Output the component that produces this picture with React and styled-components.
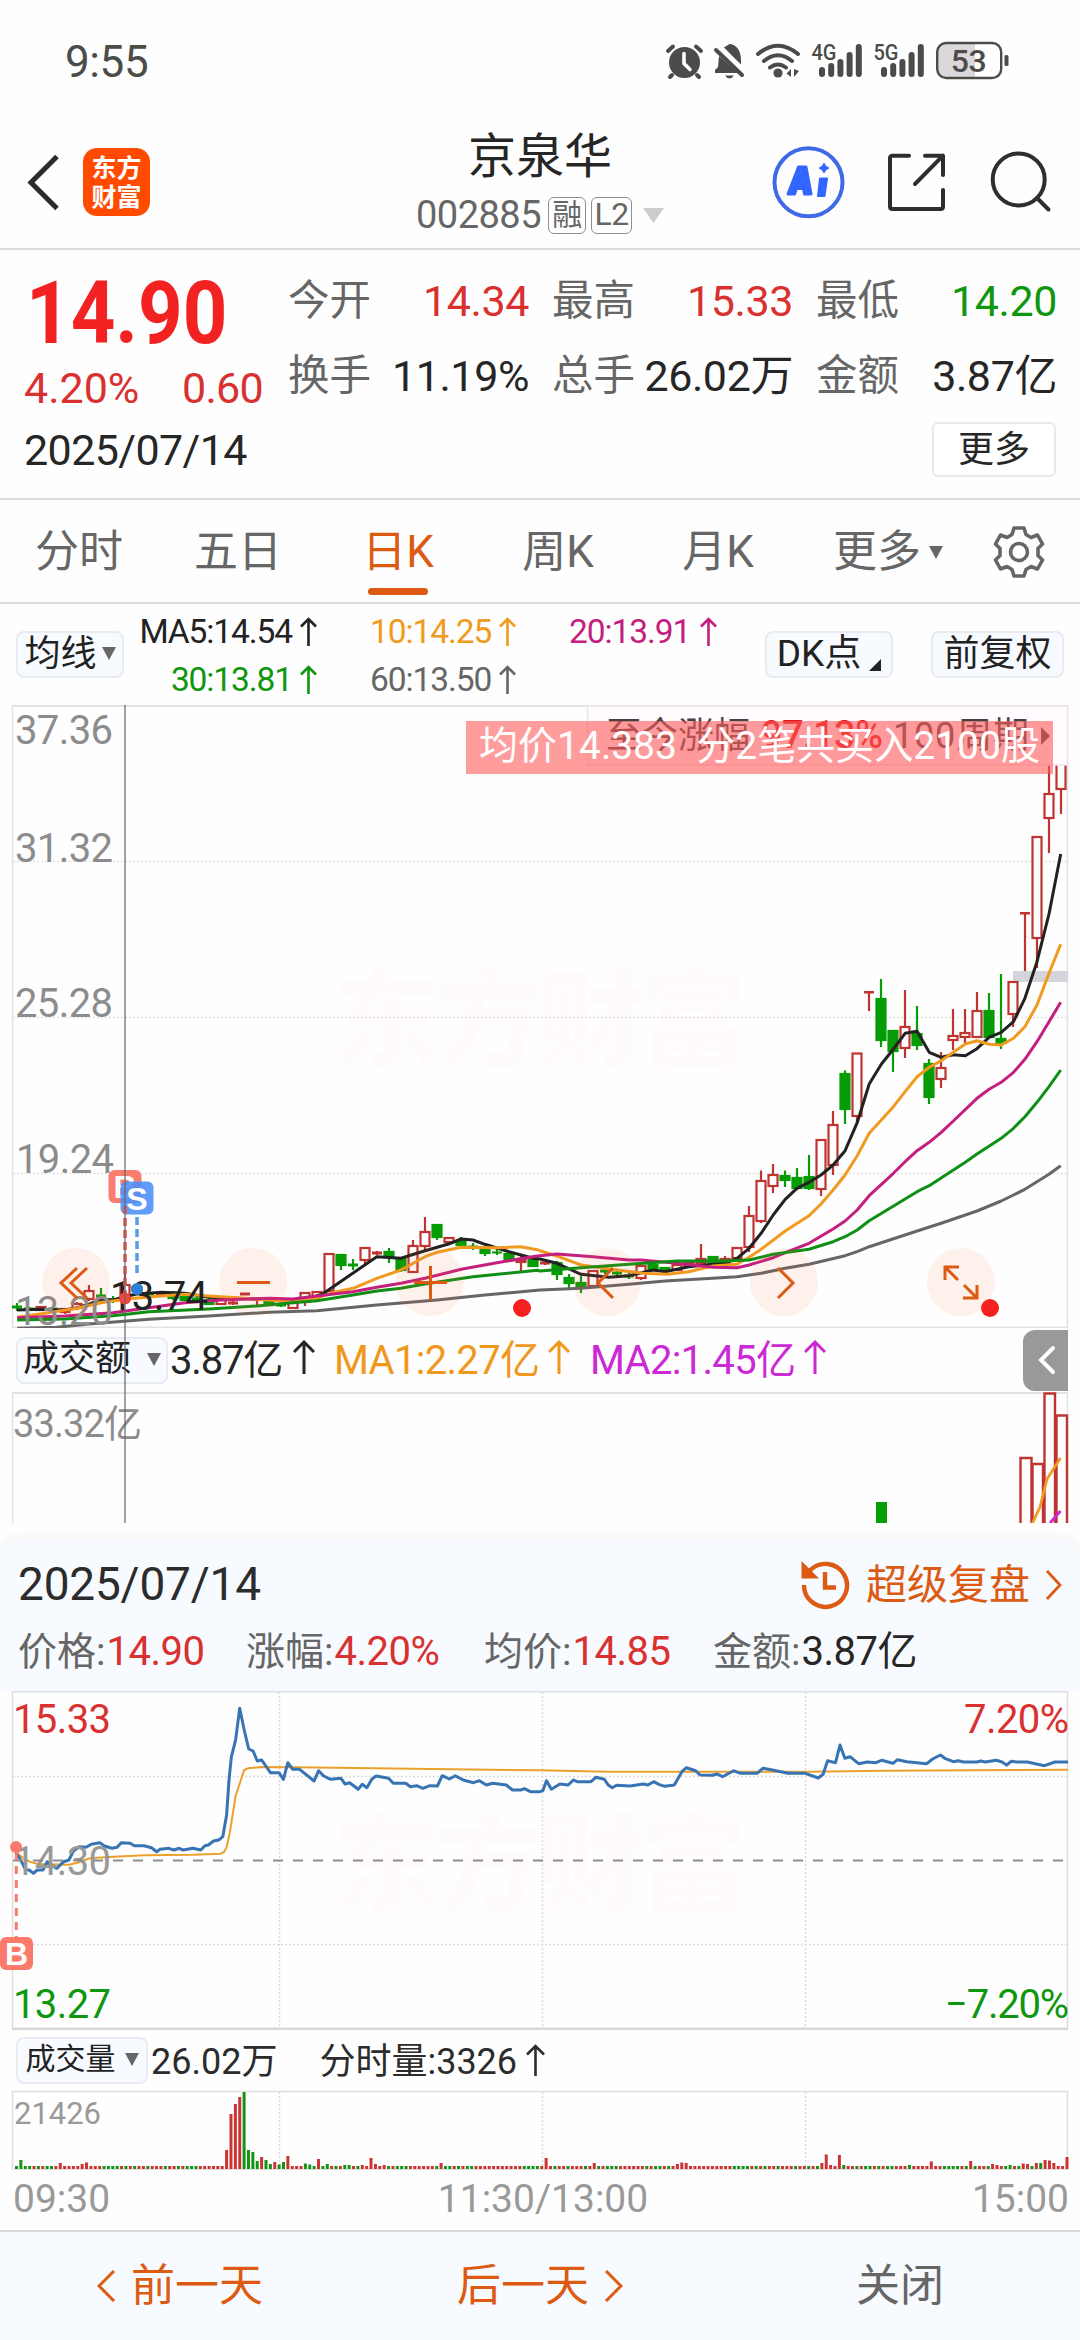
import React from 'react';
import styled, { createGlobalStyle } from 'styled-components';

const GlobalStyle = createGlobalStyle`
  * {
    box-sizing: border-box;
  }
  body {
    margin: 0;
    background: #fefefe;
    font-family: Roboto, 'Noto Sans CJK SC', sans-serif;
    color: #262626;
  }
  svg {
    display: block;
    flex: none;
  }
`;

const RED = '#d93030';
const GREEN = '#0f960f';
const ORANGE = '#dd5a12';
const GREY = '#666666';

const Page = styled.div`
  width: 1080px;
  height: 2340px;
  overflow: hidden;
  display: flex;
  flex-direction: column;
  white-space: nowrap;
`;

/* ---------- status bar ---------- */

const StatusBar = styled.div`
  height: 124px;
  flex: none;
  padding: 36px 71px 0 65px;
  display: flex;
  justify-content: space-between;
  color: #4b4c4a;
`;

const Clock = styled.div`
  font-size: 44px;
  line-height: 52px;
  letter-spacing: -0.4px;
`;

const StatusIcons = styled.div`
  display: flex;
  height: 50px;
`;

/* ---------- header ---------- */

const Header = styled.div`
  height: 126px;
  flex: none;
  display: grid;
  grid-template-columns: 340px 400px 340px;
  border-bottom: 2px solid #dcdcdc;
`;

const HeaderLeft = styled.div`
  display: flex;
  padding: 24px 0 0 26px;
  gap: 23px;
`;

const BrandLogo = styled.div`
  width: 67px;
  height: 68px;
  border-radius: 14px;
  background: #ff4a00;
  color: #fff;
  font-family: 'Noto Sans CJK SC', sans-serif;
  font-weight: 700;
  font-size: 25px;
  line-height: 29px;
  padding-top: 4px;
  text-align: center;
`;

const HeaderTitle = styled.div`
  display: flex;
  flex-direction: column;
  align-items: center;
`;

const StockName = styled.div`
  font-size: 48px;
  line-height: 62px;
  padding-top: 2px;
`;

const StockCode = styled.div`
  display: flex;
  align-items: center;
  height: 50px;
  margin-top: 2px;
  font-size: 38px;
  color: ${GREY};
  letter-spacing: -0.5px;
`;

const CodeTag = styled.span`
  width: ${(p) => p.$w}px;
  height: 37px;
  margin-left: ${(p) => p.$ml}px;
  border: 1.5px solid #8f8f8f;
  border-radius: 6px;
  font-size: ${(p) => p.$size}px;
  line-height: 33px;
  text-align: center;
`;

const HeaderRight = styled.div`
  display: flex;
  justify-content: flex-end;
  padding: 21px 24px 0 0;
`;

/* ---------- quote ---------- */

const Quote = styled.div`
  height: 250px;
  flex: none;
  padding: 18px 24px 0 24px;
  border-bottom: 2px solid #dcdcdc;
`;

const QuoteTop = styled.div`
  display: flex;
  height: 144px;
`;

const PriceBlock = styled.div`
  width: 264px;
  flex: none;
`;

const BigPrice = styled.div`
  font-size: 88px;
  font-weight: 700;
  line-height: 88px;
  color: #f22222;
  transform: scaleX(0.885);
  transform-origin: left;
  margin-left: 2px;
  padding-top: 1px;
`;

const PriceChange = styled.div`
  display: flex;
  justify-content: space-between;
  width: 239px;
  margin-top: 3px;
  font-size: 43px;
  line-height: 56px;
  color: ${RED};

  span:last-child {
    letter-spacing: -0.7px;
  }
`;

const QuoteGrid = styled.div`
  display: grid;
  grid-template-columns: repeat(3, 241px);
  grid-auto-rows: 75px;
  column-gap: 23px;
`;

const QuoteCell = styled.div`
  display: flex;
  justify-content: space-between;
  line-height: 66px;
  font-size: 41.5px;
  color: ${GREY};
`;

const QuoteValue = styled.span`
  font-size: 43px;
  letter-spacing: -0.4px;
  color: ${(p) => p.$color || '#262626'};
`;

const QuoteBottom = styled.div`
  display: flex;
  justify-content: space-between;
  padding-top: 10px;
`;

const QuoteDate = styled.div`
  font-size: 43px;
  line-height: 56px;
  letter-spacing: -0.6px;
`;

const MoreButton = styled.button`
  width: 124px;
  height: 55px;
  padding: 0;
  border: 2px solid #e9e9e9;
  border-radius: 6px;
  background: #fff;
  font: inherit;
  font-size: 36px;
  line-height: 48px;
  color: #262626;
`;

/* ---------- tabs ---------- */

const Tabs = styled.div`
  height: 104px;
  flex: none;
  display: grid;
  grid-template-columns: 158px repeat(4, 160px) 180px 82px;
  border-bottom: 2px solid #dcdcdc;
`;

const Tab = styled.div`
  display: flex;
  flex-direction: column;
  align-items: center;
  padding-top: 21px;
  font-size: 44px;
  line-height: 62px;
  color: ${(p) => (p.$active ? ORANGE : GREY)};
`;

const TabLine = styled.div`
  width: 60px;
  height: 7px;
  border-radius: 4px;
  background: ${ORANGE};
  margin-top: 5px;
`;

const MoreTab = styled(Tab)`
  flex-direction: row;
  align-items: flex-start;
  justify-content: center;
  gap: 8px;

  svg {
    margin-top: 25px;
  }
`;

const GearTab = styled.div`
  display: flex;
  justify-content: center;
  padding-top: 25px;
`;

/* ---------- indicator rows ---------- */

const IndicatorRow = styled.div`
  height: 101px;
  flex: none;
  display: flex;
  padding: 0 16px;
`;

const ChipButton = styled.button`
  display: flex;
  align-items: center;
  justify-content: center;
  gap: ${(p) => p.$gap || 5}px;
  width: ${(p) => p.$w}px;
  height: 47px;
  flex: none;
  margin-top: ${(p) => p.$mt || 0}px;
  padding: 0 0 2px;
  border: 2px solid #e9ebf2;
  border-radius: 8px;
  background: #f7faff;
  font: inherit;
  font-size: ${(p) => p.$size || 36}px;
  line-height: 40px;
  color: #222;
`;

const AverageGrid = styled.div`
  display: grid;
  grid-template-columns: 193px 146px 148px;
  column-gap: 53px;
  grid-auto-rows: 48px;
  padding-top: 3px;
  width: 641px;
`;

const AverageItem = styled.div`
  display: flex;
  align-items: center;
  justify-content: ${(p) => (p.$end ? 'flex-end' : 'space-between')};
  gap: 8px;
  font-size: 33.5px;
  letter-spacing: -1.1px;
  color: ${(p) => p.$color};
`;

/* ---------- k-line area ---------- */

const KlineArea = styled.div`
  position: relative;
  flex: none;
  height: 818px;
`;

const PanButtons = styled.div`
  position: absolute;
  left: 42px;
  top: 543px;
  display: flex;
  gap: 109px;
`;

const PanButton = styled.div`
  width: 68px;
  height: 68px;
  border-radius: 50%;
  background: rgba(255, 110, 60, 0.09);
`;

const CrossLine = styled.div`
  position: absolute;
  left: 124px;
  top: 0;
  bottom: 0;
  width: 2px;
  background: rgba(100, 100, 100, 0.6);
`;

const CostBanner = styled.div`
  position: absolute;
  left: 466px;
  top: 16px;
  width: 587px;
  height: 53px;
  background: rgba(255, 90, 90, 0.6);
  color: #fff;
  font-size: 39px;
  line-height: 51px;
  text-align: center;
  white-space: pre;
`;

const AmountRow = styled.div`
  display: flex;
  align-items: center;
  height: 64px;
  padding-left: 16px;
  font-size: 40px;
`;

const AmountItem = styled.span`
  display: flex;
  align-items: center;
  justify-content: space-between;
  width: ${(p) => p.$w}px;
  margin-left: ${(p) => p.$ml}px;
  margin-top: -6px;
  color: ${(p) => p.$color};
  letter-spacing: ${(p) => p.$ls || 0}px;
`;

const DrawerHandle = styled.div`
  margin-left: auto;
  margin-right: 12px;
  width: 45px;
  height: 61px;
  padding: 14px 0 0 14px;
  border-radius: 12px 0 0 12px;
  background: #9b989b;
`;

/* ---------- day panel ---------- */

const DayPanel = styled.div`
  flex: none;
  margin-top: 17px;
  height: 151px;
  border-radius: 18px 18px 0 0;
  background: #f7faff;
  box-shadow: 0 -4px 10px rgba(80, 60, 70, 0.04);
  padding: 0 18px;
`;

const DayHead = styled.div`
  display: flex;
  justify-content: space-between;
  height: 84px;
  line-height: 88px;
  font-size: 46px;
  letter-spacing: -0.2px;
  color: #2c2c2c;
`;

const ReplayLink = styled.div`
  display: flex;
  align-items: center;
  padding-top: 5px;
  font-size: 41px;
  letter-spacing: 0;
  color: ${ORANGE};

  span {
    margin: 0 15px 0 16px;
  }
`;

const DayStats = styled.div`
  display: grid;
  grid-template-columns: 228px 238px 229px 1fr;
  line-height: 56px;
  font-size: 39px;
  color: ${GREY};
`;

const DayValue = styled.span`
  font-size: 40px;
  letter-spacing: -0.5px;
  margin-left: 1px;
  color: ${(p) => p.$color || '#262626'};
`;

const VolumeRow = styled.div`
  display: flex;
  flex: none;
  align-items: center;
  height: 60px;
  padding-left: 16px;
  font-size: 36px;
  color: #2c2c2c;
`;

const VolumeText = styled.span`
  margin: -5px ${(p) => p.$mr || 0}px 0 ${(p) => p.$ml}px;
`;

const TimeAxis = styled.div`
  display: grid;
  grid-template-columns: 1fr 1fr 1fr;
  flex: none;
  height: 60px;
  padding: 0 11px 0 13px;
  font-size: 39px;
  line-height: 58px;
  color: #999;

  span:nth-child(2) {
    text-align: center;
    padding-left: 4px;
  }
  span:nth-child(3) {
    text-align: right;
  }
`;

const BottomBar = styled.div`
  flex: none;
  height: 110px;
  border-top: 2px solid #d6dadd;
  background: #f7faff;
  display: grid;
  grid-template-columns: 360px 360px 360px;
  align-items: center;
`;

const BottomItem = styled.div`
  display: flex;
  align-items: center;
  justify-content: center;
  gap: 15px;
  font-size: 44px;
  line-height: 60px;
  color: ${(p) => p.$color};
`;

/* ---------- small icons ---------- */

const Caret = ({ w = 14, h = 13, color = '#666' }) => (
  <svg width={w} height={h} viewBox="0 0 14 13" preserveAspectRatio="none">
    <path d="M0 0H14L7 13Z" fill={color} />
  </svg>
);

const UpArrow = ({ w = 17, h = 29, sw = 2.6 }) => (
  <svg width={w} height={h} fill="none" stroke="currentColor" strokeWidth={sw}>
    <path d={`M${w / 2} ${h}V2M1 ${w / 2 + 1}L${w / 2} 2L${w - 1} ${w / 2 + 1}`} />
  </svg>
);

const Chevron = ({ w, h, sw, left }) => (
  <svg width={w} height={h} fill="none" stroke="currentColor" strokeWidth={sw}>
    <path d={left ? `M${w - 2} 1L2 ${h / 2}L${w - 2} ${h - 1}` : `M2 1L${w - 2} ${h / 2}L2 ${h - 1}`} />
  </svg>
);

const AlarmIcon = () => (
  <svg width="50" height="50" viewBox="662 36 50 50" fill="none" strokeLinecap="round">
    <circle cx="684.5" cy="62.5" r="15.5" fill="#4b4c4a" />
    <path d="M668 51L673 46.5M701 51L696 46.5M672 75L670 77M697 75L699 77" stroke="#4b4c4a" strokeWidth="4" />
    <path d="M684 53.5V63.5L690 69.5" stroke="#fefefe" strokeWidth="3.6" />
  </svg>
);

const BellOffIcon = () => (
  <svg width="44" height="50" viewBox="712 36 44 50">
    <path d="M729.5 44C735 44 741 49 741 60V66L723.5 48C725 46.5 726.5 46 729.5 44Z" fill="#4b4c4a" />
    <path d="M719 56L738 73H715V70L718 67Z" fill="#4b4c4a" />
    <path d="M725 75.5H734Q732 78.5 729.5 78.5Q727 78.5 725 75.5Z" fill="#4b4c4a" />
    <path d="M716 50L742 75" stroke="#4b4c4a" strokeWidth="4" strokeLinecap="round" />
    <path d="M722 47L745 70" stroke="#fefefe" strokeWidth="2" />
  </svg>
);

const WifiIcon = () => (
  <svg width="52" height="50" viewBox="756 36 52 50" fill="none" stroke="#4b4c4a" strokeWidth="4" strokeLinecap="round">
    <path d="M758 54Q778 37.5 798 54M764 61Q778 49.5 792 61M770 67.5Q778 61.5 786 67.5" />
    <circle cx="778" cy="73" r="4.6" fill="#4b4c4a" stroke="none" />
    <path d="M791 69V77L786.5 73.5ZM794 69V77L799 71Z" fill="#4b4c4a" stroke="none" />
  </svg>
);

const SignalIcon = ({ label }) => (
  <svg width="62" height="50" viewBox="0 0 62 50">
    <text x="3.5" y="23.5" fontSize="22" fontWeight="500" textLength="25" lengthAdjust="spacingAndGlyphs" fill="#4b4c4a">
      {label}
    </text>
    {[10, 14, 18, 25, 33].map((h, i) => (
      <rect key={h} x={11 + i * 9.2} y={41 - h} width="6" height={h} rx="3" fill="#4b4c4a" />
    ))}
  </svg>
);

const BatteryIcon = () => (
  <svg width="77" height="50" viewBox="932 36 77 50">
    <path d="M947 43H975V78H947Q938 78 938 69V52Q938 43 947 43Z" fill="#dbd7dc" />
    <rect x="937.2" y="43" width="64" height="35" rx="9" fill="none" stroke="#4b4c4a" strokeWidth="2.4" />
    <rect x="1004.5" y="55" width="4" height="11" rx="1.5" fill="#4b4c4a" />
    <text x="968.5" y="72" textAnchor="middle" fontSize="32" fontWeight="500" letterSpacing="-0.5" fill="#4b4c4a">53</text>
  </svg>
);

const AiIcon = () => (
  <svg width="90" height="74" viewBox="771 145 90 74">
    <circle cx="808.5" cy="182.3" r="34" fill="none" stroke="#4069e6" strokeWidth="4" />
    <g fill="#3366ff" stroke="#3366ff" strokeLinejoin="round">
      <path d="M788 194L798.5 167H806L811 194H804.5L803.5 188.5H796.5L794.5 194ZM799 182.5H802.5L801.5 176Z" strokeWidth="3" fillRule="evenodd" />
      <path d="M820 178.5H827L824.5 196H818Z" strokeWidth="2" />
      <path d="M824 163Q825 167 829 168Q825 169.5 824 173Q823 169.5 819 168Q823 167 824 163Z" strokeWidth="1" />
    </g>
  </svg>
);

const ShareIcon = () => (
  <svg width="114" height="74" viewBox="861 145 114 74" fill="none" stroke="#2e2e2e" strokeWidth="4" strokeLinecap="round" strokeLinejoin="round">
    <path d="M909 155.7H892.5Q890 155.7 890 158.2V206.5Q890 209 892.5 209H940.5Q943 209 943 206.5V190" />
    <path d="M925 155.7H943V175M943 155.7L915 184" />
  </svg>
);

const SearchIcon = () => (
  <svg width="81" height="74" viewBox="975 145 81 74" fill="none" stroke="#2e2e2e" strokeWidth="4" strokeLinecap="round">
    <circle cx="1018.7" cy="179.5" r="26" />
    <path d="M1037 198L1048.5 209.5" />
  </svg>
);

const GearIcon = () => (
  <svg width="54" height="54" viewBox="-27 -27 54 54" fill="none" stroke="#666" strokeWidth="3.6" strokeLinejoin="round">
    <circle r="8.5" />
    <path d="M-5 -24H5L7 -17.5L12 -14.5L18.5 -17L23.5 -8L19 -3.5V3.5L23.5 8L18.5 17L12 14.5L7 17.5L5 24H-5L-7 17.5L-12 14.5L-18.5 17L-23.5 8L-19 3.5V-3.5L-23.5 -8L-18.5 -17L-12 -14.5L-7 -17.5Z" />
  </svg>
);

const ReplayIcon = () => (
  <svg width="50" height="50" viewBox="0 0 50 50" fill="none" stroke={ORANGE} strokeWidth="4.4">
    <path d="M4 25A21.5 21.5 0 1 0 9.500 11" />
    <path d="M3 4.500V17H15.500Z" fill={ORANGE} strokeWidth="3" />
    <path d="M25 12V27.500H36" />
  </svg>
);

/* ---------- chart data ---------- */

// [direction, high, open/close top, open/close bottom, low], y in page pixels
const CANDLES = [
  ['g', 1303, 1306, 1308, 1311], ['g', 1307, 1308, 1310, 1311], ['r', 1307, 1307, 1310, 1310], ['g', 1307, 1308, 1310, 1312],
  ['r', 1308, 1309, 1312, 1314], ['r', 1302, 1304, 1308, 1310], ['r', 1285, 1291, 1299, 1301], ['g', 1288, 1295, 1297, 1303],
  ['g', 1296, 1299, 1301, 1303], ['r', 1274, 1285, 1297, 1302], ['g', 1284, 1287, 1291, 1294], ['g', 1291, 1293, 1295, 1297],
  ['r', 1291, 1293, 1295, 1296], ['g', 1291, 1293, 1298, 1300], ['g', 1295, 1296, 1300, 1301], ['g', 1296, 1298, 1300, 1302],
  ['g', 1297, 1300, 1304, 1305], ['r', 1299, 1300, 1304, 1305], ['r', 1299, 1302, 1304, 1305], ['r', 1293, 1293, 1295, 1295],
  ['r', 1299, 1299, 1300, 1306], ['g', 1300, 1302, 1305, 1306], ['g', 1303, 1304, 1306, 1307], ['r', 1302, 1303, 1308, 1308],
  ['r', 1292, 1293, 1302, 1306], ['r', 1291, 1292, 1296, 1297], ['r', 1253, 1254, 1291, 1292], ['g', 1254, 1255, 1265, 1270],
  ['g', 1259, 1264, 1266, 1270], ['r', 1247, 1248, 1260, 1265], ['r', 1251, 1252, 1254, 1255], ['g', 1248, 1252, 1256, 1263],
  ['g', 1258, 1259, 1270, 1272], ['r', 1240, 1246, 1272, 1273], ['r', 1217, 1232, 1246, 1252], ['g', 1225, 1225, 1237, 1240],
  ['r', 1237, 1238, 1242, 1243], ['g', 1237, 1241, 1245, 1247], ['g', 1243, 1246, 1247, 1250], ['g', 1248, 1250, 1253, 1256],
  ['g', 1249, 1252, 1253, 1255], ['g', 1251, 1254, 1260, 1261], ['r', 1256, 1259, 1262, 1272], ['g', 1258, 1259, 1266, 1267],
  ['r', 1262, 1262, 1264, 1265], ['g', 1261, 1263, 1274, 1280], ['g', 1274, 1278, 1283, 1288], ['g', 1276, 1283, 1287, 1293],
  ['r', 1270, 1271, 1286, 1287], ['g', 1268, 1270, 1272, 1274], ['g', 1270, 1272, 1274, 1276], ['g', 1272, 1275, 1277, 1279],
  ['r', 1265, 1266, 1278, 1280], ['g', 1263, 1265, 1269, 1271], ['g', 1267, 1268, 1271, 1272], ['r', 1264, 1265, 1270, 1271],
  ['r', 1262, 1263, 1266, 1267], ['r', 1244, 1259, 1263, 1264], ['g', 1256, 1257, 1263, 1264], ['r', 1256, 1259, 1263, 1264],
  ['r', 1247, 1248, 1258, 1260], ['r', 1206, 1216, 1247, 1252], ['r', 1170.5, 1181, 1221, 1223], ['r', 1164, 1175, 1186, 1193],
  ['g', 1170.5, 1176, 1180, 1187], ['g', 1168, 1178, 1188, 1190], ['g', 1155, 1177, 1188, 1190], ['r', 1140, 1140, 1189, 1196],
  ['r', 1111, 1125, 1165, 1175], ['g', 1070.5, 1074, 1109, 1124], ['r', 1053, 1053.5, 1116, 1123], ['r', 992, 991.5, 993, 1011],
  ['g', 979, 999, 1040, 1047], ['g', 1031, 1031, 1051, 1072], ['r', 990, 1027, 1048, 1058], ['g', 1006, 1034, 1045, 1050],
  ['g', 1059, 1064, 1097, 1104], ['r', 1052, 1068, 1079, 1088], ['r', 1009, 1036, 1040, 1050], ['r', 1009, 1033, 1037, 1043],
  ['r', 992, 1011, 1037, 1037], ['g', 993, 1011, 1037, 1037], ['g', 974, 1039, 1043, 1049], ['r', 981, 982, 1014, 1027],
  ['r', 913, 912.5, 914, 971], ['r', 837, 837, 938, 968], ['r', 765, 794, 818, 853], ['r', 765, 760, 789, 814],
];

// Moving averages. Points sit on a dense grid, one list for each half of the plot.
const AVERAGES = [
  {
    color: '#666666',
    left: '50,745 165,742 258,732 432,718 606,708 781,697 920,692 1094,675 1269,660 1408,645 1560,631',
    right: '0,1080 119,1075 258,1063 363,1053 502,1045 572,1040 642,1030 712,1015 781,1003 886,977 921,965 956,950 1095,903 1165,880 1269,843 1339,813 1375,795 1408,778 1478,733 1512,707',
  },
  {
    color: '#222222',
    left: '50,690 119,688 188,690 225,683 258,673 293,657 328,660 362,650 397,642 470,637 537,640 606,652 676,655 746,657 850,662 900,655 940,640 1000,597 1094,530 1164,535 1234,512 1300,493 1339,477 1373,480 1408,493 1478,515 1548,535',
    right: '0,987 49,1000 119,1033 200,1042 258,1037 328,1020 363,1025 432,1010 502,1003 537,1000 572,985 607,955 642,910 677,855 712,808 746,775 781,757 816,735 851,705 886,662 921,578 956,462 991,403 1026,357 1060,310 1095,304 1130,367 1165,382 1200,374 1235,377 1269,356 1304,322 1339,307 1375,275 1408,205 1443,95 1478,-48 1512,-228',
  },
  {
    color: '#f09a20',
    left: '50,712 130,700 223,685 293,668 362,658 440,650 537,643 606,648 711,655 781,660 850,665 920,655 960,640 1025,625 1094,595 1164,570 1200,550 1234,530 1269,517 1339,502 1450,503 1512,500 1560,509',
    right: '0,962 49,978 119,1005 223,1020 300,1030 370,1033 432,1025 502,1008 572,1003 607,982 642,958 712,903 781,857 816,822 851,780 886,735 921,677 956,610 991,570 1026,530 1060,485 1095,440 1130,412 1165,392 1200,367 1235,342 1269,332 1304,343 1339,345 1375,325 1408,290 1443,225 1478,130 1512,43',
  },
  {
    color: '#c41f7e',
    left: '50,713 188,708 328,698 432,683 537,668 641,660 781,655 850,657 920,648 1025,635 1094,622 1164,610 1234,595 1339,568 1443,548 1560,528',
    right: '0,977 49,972 154,980 258,990 293,990 398,1000 502,1012 572,1013 607,1005 677,983 712,968 781,940 851,897 886,873 921,840 956,797 1026,730 1060,695 1095,662 1130,637 1165,607 1200,573 1269,505 1304,478 1339,457 1375,427 1408,388 1443,335 1512,217',
  },
  {
    color: '#0f8f14',
    left: '50,720 188,717 328,707 432,695 606,687 746,678 850,668 920,662 1025,645 1094,633 1164,625 1234,612 1373,590 1560,571',
    right: '0,1023 119,1013 258,1003 398,993 537,993 607,990 677,973 781,958 851,935 886,920 921,900 956,872 1095,785 1130,767 1235,697 1269,672 1339,625 1375,595 1408,560 1443,517 1478,470 1512,420',
  },
];

const DAY_PRICE = {
  left: '48,490 60,510 75,540 85,540 97,550 108,540 125,540 137,515 150,527 165,535 185,515 200,510 213,483 230,470 250,472 265,463 290,458 303,468 325,475 340,472 352,458 378,460 390,467 418,467 440,473 455,485 465,478 490,475 505,480 520,475 532,480 560,475 583,480 595,467 605,465 620,453 635,450 647,440 658,375 665,270 672,200 684,150 696,55 709,120 722,177 735,183 747,213 760,210 785,248 810,248 823,268 836,218 850,238 870,238 912,273 925,242 940,258 960,268 990,265 1002,282 1015,278 1040,298 1052,283 1065,293 1080,267 1092,258 1128,265 1142,280 1178,280 1192,290 1210,287 1228,295 1248,287 1270,288 1284,257 1305,267 1322,257 1345,270 1375,278 1392,272 1412,285 1430,280 1470,285 1488,300 1512,300 1523,296 1540,305 1560,305',
  right: '0,305 8,302 19,272 33,298 58,282 82,285 97,270 108,275 148,275 162,262 187,268 198,285 210,293 222,286 262,288 300,282 313,285 330,275 345,283 362,289 390,285 412,245 425,233 452,242 465,255 500,256 515,252 530,260 562,242 582,250 630,250 647,235 675,240 720,250 770,250 808,264 822,253 835,212 858,218 871,165 885,205 900,200 925,221 950,216 975,218 992,211 1025,220 1038,209 1065,215 1123,221 1140,207 1163,195 1175,205 1200,215 1215,212 1230,216 1268,216 1280,213 1293,216 1325,211 1340,215 1355,225 1368,214 1385,216 1415,216 1465,227 1495,216 1533,216',
};

const DAY_AVERAGE = {
  left: '48,490 85,515 110,522 200,524 225,518 260,505 330,500 420,496 560,494 640,491 650,487 658,472 667,430 684,318 709,240 720,235 760,231 860,232 1560,241',
  right: '0,241 200,245 780,245 1000,242 1533,239',
};

// minute index: [height, direction]; every other minute is a 3px stub
const VOLUME_PEAKS = {
  1: [9, 'g'], 10: [6, 'r'], 15: [5, 'r'], 16: [6.5, 'r'], 48: [19, 'r'], 49: [55, 'r'], 50: [65, 'r'], 51: [72, 'r'],
  52: [77, 'g'], 53: [19, 'g'], 54: [17, 'g'], 55: [8, 'g'], 56: [12, 'r'], 57: [9, 'g'], 58: [5, 'g'], 59: [7, 'r'],
  60: [4.5, 'g'], 61: [7, 'g'], 62: [13, 'r'], 66: [5.5, 'g'], 67: [4.5, 'g'], 69: [10, 'r'], 71: [5, 'g'], 75: [4, 'g'],
  76: [4, 'g'], 79: [4, 'r'], 81: [11, 'r'], 82: [5, 'r'], 84: [4, 'r'], 97: [6, 'r'], 121: [11, 'r'], 132: [6, 'r'],
  151: [5, 'r'], 152: [6.5, 'r'], 153: [6, 'r'], 184: [6, 'r'], 185: [14.5, 'r'], 186: [4, 'r'], 188: [14, 'r'],
  189: [4, 'g'], 204: [4, 'g'], 209: [7.5, 'r'], 218: [8, 'r'], 223: [5, 'r'], 224: [4, 'r'], 227: [4, 'g'],
  230: [5.5, 'r'], 231: [5, 'r'], 233: [6, 'r'], 234: [6, 'g'], 235: [9, 'r'], 236: [8.5, 'r'], 237: [6, 'r'],
  238: [3, 'r'], 240: [12, 'r'],
};

const MINUTES = 'grggrgrggrrrrrrrrrrrggggrgrgrrgrrrgrrgrgggrrrrrr';

const project = (list, originX, originY) =>
  list.split(' ').map((p) => {
    const [x, y] = p.split(',').map(Number);
    return `${(originX + x * 0.3444).toFixed(1)},${(originY + y / 3).toFixed(1)}`;
  });

const linePoints = (line, leftY, rightY) =>
  [...project(line.left, 0, leftY), ...project(line.right, 540, rightY)].join(' ');

/* ---------- charts ---------- */

const Watermark = ({ y }) => (
  <text x="333" y={y} fontSize="106" fontWeight="900" textLength="414" fill="#fefafe" fontFamily="'Noto Sans CJK SC'">
    东方财富
  </text>
);

const AxisText = ({ x, y, w, size = 40, color = '#8c8c8c', children }) => (
  <text x={x} y={y} fontSize={size} textLength={w} fill={color}>{children}</text>
);

const Marker = ({ x, y, color, children }) => (
  <g>
    <rect x={x} y={y} width="33" height="33" rx="6" fill={color} />
    <text x={x + 16.5} y={y + 28} textAnchor="middle" fontSize="32" fontWeight="700" fill="#fff" fontFamily="'Liberation Sans'">
      {children}
    </text>
  </g>
);

const Candle = ({ x, data }) => {
  const [dir, high, top, bottom, low] = data;
  const color = dir === 'r' ? '#bf3330' : '#069c06';
  const height = bottom - top;
  return (
    <g stroke={color} strokeWidth="2.2">
      <path d={`M${x} ${high}V${top}M${x} ${bottom}V${low}`} />
      <rect
        x={x - 4.5}
        y={top}
        width="9"
        height={height}
        strokeWidth={height < 3 ? 1 : 2.2}
        fill={dir === 'r' && height > 3 ? '#fefefe' : color}
      />
    </g>
  );
};

const KlineChart = () => (
  <svg width="1080" height="623" viewBox="0 705 1080 623">
    <Watermark y="1058" />
    <g stroke="#e2e2e2" strokeWidth="1.5" strokeDasharray="2 2">
      <path d="M13 861.5H1068M13 1017.5H1068M13 1173.5H1068" />
    </g>
    <path d="M12.5 706V1328M1067.5 706V1328" stroke="#e3e3e3" strokeWidth="1.5" />
    <path d="M12 706H1068M12 1327.5H1068" stroke="#e2e2e2" strokeWidth="2" />
    <rect x="1013" y="971" width="55" height="11" fill="#d4d4dc" />
    {CANDLES.map((c, i) => (
      <Candle key={i} x={17 + i * 12} data={c} />
    ))}
    <g fill="none" strokeWidth="3" strokeLinejoin="round">
      {AVERAGES.map((line) => (
        <polyline key={line.color} points={linePoints(line, 1080, 930)} stroke={line.color} />
      ))}
    </g>
    <rect x="587.5" y="706" width="480" height="59" fill="#fffbfe" stroke="#ebe4ea" strokeWidth="1.5" />
    <text x="606" y="748" fontSize="36" fill="#444">至今涨幅</text>
    <text x="761" y="748" fontSize="38" textLength="122" fontWeight="500" fill="#e01818">97.13%</text>
    <text x="893" y="748" fontSize="36" textLength="136" fill="#444">100周期</text>
    <path d="M1041 727L1050 736L1041 745Z" fill="#444" />
    <AxisText x="15" y="744" w="98">37.36</AxisText>
    <AxisText x="15" y="862" w="98">31.32</AxisText>
    <AxisText x="15" y="1017" w="98">25.28</AxisText>
    <AxisText x="16" y="1173" w="98">19.24</AxisText>
    <AxisText x="15" y="1325" w="98">13.20</AxisText>
    <AxisText x="110" y="1310" w="98" color="#222">13.74</AxisText>
    <Marker x={108.5} y={1170} color="rgba(250, 112, 96, 0.9)">B</Marker>
    <Marker x={120.5} y={1181.5} color="rgba(74, 144, 250, 0.88)">S</Marker>
    <path d="M125 1206V1294" stroke="#f0574c" strokeWidth="3.5" strokeDasharray="8 4" />
    <path d="M137 1217V1273" stroke="#5a9ce8" strokeWidth="3.5" strokeDasharray="8 4" />
    <circle cx="125" cy="1298.5" r="6" fill="#f0463c" />
    <circle cx="137" cy="1289" r="6" fill="#2f80d8" />
    <circle cx="522" cy="1308" r="9" fill="#f52020" />
    <circle cx="990" cy="1308" r="9" fill="#f52020" />
  </svg>
);

const AmountChart = () => (
  <svg width="1080" height="131" viewBox="0 1391 1080 131">
    <path d="M12 1392H1068" stroke="#e2e2e2" strokeWidth="2" />
    <path d="M12.5 1392V1522M1067.5 1392V1522" stroke="#e3e3e3" strokeWidth="1.5" />
    <AxisText x="13" y="1436" w="129" size={38}>33.32亿</AxisText>
    <rect x="876" y="1501" width="11" height="21" fill="#06a006" />
    <g fill="none" stroke="#bf3330" strokeWidth="2.4">
      <path d="M1020.5 1524V1457H1031.5V1524M1032.5 1524V1463H1043V1524M1044.5 1524V1392.5H1055V1524M1056.5 1524V1414.5H1067V1524" />
    </g>
    <path d="M1032.5 1522L1040 1506L1047 1478L1060.5 1457" fill="none" stroke="#f09a20" strokeWidth="2.8" />
    <path d="M1050 1522L1060.5 1510" stroke="#cc28d6" strokeWidth="2.8" />
  </svg>
);

const DayChart = () => (
  <svg width="1080" height="339" viewBox="0 1691 1080 339">
    <Watermark y="1902" />
    <g stroke="#dadada" strokeWidth="1.5" strokeDasharray="2 2">
      <path d="M13 1776.5H1068M13 1944.5H1068M279.5 1692V2029M542.5 1692V2029M805.5 1692V2029" />
    </g>
    <path d="M12.5 1692V2029M1067.5 1692V2029" stroke="#dddddd" strokeWidth="1.5" />
    <path d="M12 1691.8H1068" stroke="#dde0e6" strokeWidth="1.5" />
    <path d="M12 2028.8H1068" stroke="#d8d8d8" strokeWidth="2.4" />
    <polyline points={linePoints(DAY_AVERAGE, 1690, 1690)} fill="none" stroke="#eba02c" strokeWidth="2" />
    <polyline points={linePoints(DAY_PRICE, 1690, 1690)} fill="none" stroke="#3873b3" strokeWidth="3" strokeLinejoin="round" />
    <AxisText x="13" y="1733" w="98" color={RED}>15.33</AxisText>
    <AxisText x="13" y="1875" w="98" color="#999">14.30</AxisText>
    <AxisText x="13" y="2018" w="98" color={GREEN}>13.27</AxisText>
    <AxisText x="964" y="1733" w="105" color={RED}>7.20%</AxisText>
    <AxisText x="945" y="2018" w="124" color={GREEN}>−7.20%</AxisText>
    <path d="M13 1860.5H1068" stroke="#8c8c8c" strokeWidth="2.2" strokeDasharray="10 10" />
    <path d="M16.3 1852V1938" stroke="#fa7a6c" strokeWidth="3" strokeDasharray="8 6" />
    <circle cx="16" cy="1847" r="6" fill="#fa7a6c" />
    <Marker x={0} y={1937} color="#fa7a6c">B</Marker>
  </svg>
);

const VolumeChart = () => (
  <svg width="1080" height="80" viewBox="0 2091 1080 80">
    <path d="M12.5 2092.5H1067.5V2170.5H12.5Z" fill="none" stroke="#dfdfdf" strokeWidth="1.5" />
    <path d="M279.5 2093V2170M542.5 2093V2170M805.5 2093V2170" stroke="#dadada" strokeWidth="1.5" strokeDasharray="2 2" />
    <AxisText x="14" y="2125" w="87" size={31} color="#999">21426</AxisText>
    {Array.from({ length: 241 }, (_, i) => {
      const [h, dir] = VOLUME_PEAKS[i] || [3, MINUTES[i % MINUTES.length]];
      return (
        <rect key={i} x={15 + i * 4.377} y={2170 - h} width="3" height={h} fill={dir === 'r' ? '#cc3333' : '#149414'} />
      );
    })}
  </svg>
);

/* ---------- page ---------- */

const QUOTES = [
  { label: '今开', value: '14.34', color: RED },
  { label: '最高', value: '15.33', color: RED },
  { label: '最低', value: '14.20', color: GREEN },
  { label: '换手', value: '11.19%' },
  { label: '总手', value: '26.02万' },
  { label: '金额', value: '3.87亿' },
];

const MA_ITEMS = [
  { text: 'MA5:14.54', color: '#222222', end: true },
  { text: '10:14.25', color: '#f09a20' },
  { text: '20:13.91', color: '#c41f7e' },
  { text: '30:13.81', color: GREEN, end: true },
  { text: '60:13.50', color: GREY },
];

const DAY_ITEMS = [
  { label: '价格', value: '14.90', color: RED },
  { label: '涨幅', value: '4.20%', color: RED },
  { label: '均价', value: '14.85', color: RED },
  { label: '金额', value: '3.87亿' },
];

const PAN_PATHS = [
  'M35 20L19 35L35 50M45 20L29 35L45 50',
  'M18 34.5H51',
  'M18 34.5H51M34.5 18V52',
  'M40 20L25 35L40 50',
  'M28 20L43 35L28 50',
  'M18 32V19H32M18 19L31 32M50 37V50H36M50 50L37 37',
];

const App = () => (
  <>
    <GlobalStyle />
    <Page>
      <StatusBar>
        <Clock>9:55</Clock>
        <StatusIcons>
          <AlarmIcon />
          <BellOffIcon />
          <WifiIcon />
          <SignalIcon label="4G" />
          <SignalIcon label="5G" />
          <BatteryIcon />
        </StatusIcons>
      </StatusBar>

      <Header>
        <HeaderLeft>
          <svg width="34" height="68" viewBox="26 148 34 68" fill="none" stroke="#2b2b2b" strokeWidth="5">
            <path d="M57 156.5L31 182.5L57 208.5" />
          </svg>
          <BrandLogo>
            东方
            <br />
            财富
          </BrandLogo>
        </HeaderLeft>
        <HeaderTitle>
          <StockName>京泉华</StockName>
          <StockCode>
            002885
            <CodeTag $w={38} $ml={7} $size={30}>融</CodeTag>
            <CodeTag $w={41} $ml={5} $size={32}>L2</CodeTag>
            <span style={{ marginLeft: 11 }}>
              <Caret w={21} h={15} color="#ccc" />
            </span>
          </StockCode>
        </HeaderTitle>
        <HeaderRight>
          <AiIcon />
          <ShareIcon />
          <SearchIcon />
        </HeaderRight>
      </Header>

      <Quote>
        <QuoteTop>
          <PriceBlock>
            <BigPrice>14.90</BigPrice>
            <PriceChange>
              <span>4.20%</span>
              <span>0.60</span>
            </PriceChange>
          </PriceBlock>
          <QuoteGrid>
            {QUOTES.map((q) => (
              <QuoteCell key={q.label}>
                {q.label}
                <QuoteValue $color={q.color}>{q.value}</QuoteValue>
              </QuoteCell>
            ))}
          </QuoteGrid>
        </QuoteTop>
        <QuoteBottom>
          <QuoteDate>2025/07/14</QuoteDate>
          <MoreButton>更多</MoreButton>
        </QuoteBottom>
      </Quote>

      <Tabs>
        <Tab>分时</Tab>
        <Tab>五日</Tab>
        <Tab $active>
          日K
          <TabLine />
        </Tab>
        <Tab>周K</Tab>
        <Tab>月K</Tab>
        <MoreTab>
          更多
          <Caret />
        </MoreTab>
        <GearTab>
          <GearIcon />
        </GearTab>
      </Tabs>

      <IndicatorRow>
        <ChipButton $w={108} $mt={27}>
          均线
          <Caret />
        </ChipButton>
        <AverageGrid>
          {MA_ITEMS.map((m) => (
            <AverageItem key={m.text} $color={m.color} $end={m.end}>
              {m.text}
              <UpArrow />
            </AverageItem>
          ))}
        </AverageGrid>
        <ChipButton $w={128} $mt={27} $gap={8} $size={37}>
          DK点
          <svg width="12" height="46">
            <path d="M12 28V40H0Z" fill="#222" />
          </svg>
        </ChipButton>
        <span style={{ marginLeft: 38 }}>
          <ChipButton $w={133} $mt={27}>前复权</ChipButton>
        </span>
      </IndicatorRow>

      <KlineArea>
        <KlineChart />
        <AmountRow>
          <ChipButton $w={152} $gap={16}>
            成交额
            <Caret />
          </ChipButton>
          <AmountItem $ml={2} $w={145} $ls={-1.2} $color="#262626">
            3.87亿
            <UpArrow w={22} h={34} sw={3} />
          </AmountItem>
          <AmountItem $ml={19} $w={236} $ls={-0.7} $color="#f0981c">
            MA1:2.27亿
            <UpArrow w={22} h={34} sw={3} />
          </AmountItem>
          <AmountItem $ml={20} $w={236} $ls={-0.7} $color="#cc28d6">
            MA2:1.45亿
            <UpArrow w={22} h={34} sw={3} />
          </AmountItem>
          <DrawerHandle>
            <svg width="20" height="32" fill="none" stroke="#fff" strokeWidth="4" strokeLinecap="round">
              <path d="M16 4L4 16L16 28" />
            </svg>
          </DrawerHandle>
        </AmountRow>
        <AmountChart />
        <CrossLine />
        <CostBanner>{'均价14.383  分2笔共买入2100股'}</CostBanner>
        <PanButtons>
          {PAN_PATHS.map((d) => (
            <PanButton key={d}>
              <svg width="68" height="68" fill="none" stroke={ORANGE} strokeWidth="3">
                <path d={d} />
              </svg>
            </PanButton>
          ))}
        </PanButtons>
      </KlineArea>

      <DayPanel>
        <DayHead>
          2025/07/14
          <ReplayLink>
            <ReplayIcon />
            <span>超级复盘</span>
            <Chevron w={17} h={30} sw={2.8} />
          </ReplayLink>
        </DayHead>
        <DayStats>
          {DAY_ITEMS.map((d) => (
            <div key={d.label}>
              {d.label}:<DayValue $color={d.color}>{d.value}</DayValue>
            </div>
          ))}
        </DayStats>
      </DayPanel>
      <DayChart />
      <VolumeRow>
        <ChipButton $w={132} $size={30} $gap={9}>
          成交量
          <Caret />
        </ChipButton>
        <VolumeText $ml={3}>26.02万</VolumeText>
        <VolumeText $ml={42} $mr={9}>分时量:3326</VolumeText>
        <UpArrow w={19} h={32} sw={2.6} />
      </VolumeRow>
      <VolumeChart />
      <TimeAxis>
        <span>09:30</span>
        <span>11:30/13:00</span>
        <span>15:00</span>
      </TimeAxis>
      <BottomBar>
        <BottomItem $color={ORANGE}>
          <Chevron w={19} h={32} sw={3} left />
          前一天
        </BottomItem>
        <BottomItem $color={ORANGE}>
          后一天
          <Chevron w={19} h={32} sw={3} />
        </BottomItem>
        <BottomItem $color={GREY}>关闭</BottomItem>
      </BottomBar>
    </Page>
  </>
);

export default App;
